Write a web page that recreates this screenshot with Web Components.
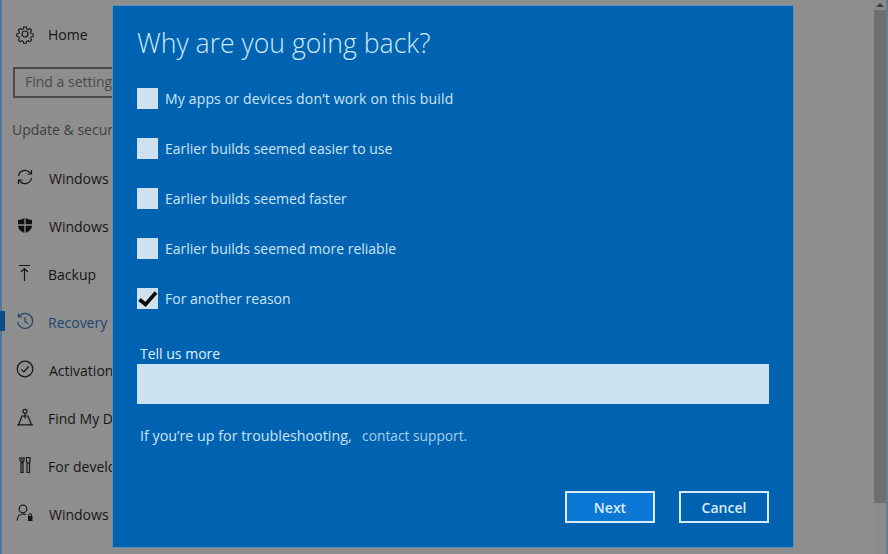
<!DOCTYPE html>
<html><head><meta charset="utf-8"><style>
html,body{margin:0;padding:0;width:888px;height:554px;overflow:hidden;background:#8e8e8e;font-family:"Open Sans",sans-serif}
</style></head><body>
<settings-page></settings-page>
<script>
const define=(n,fn)=>customElements.define(n,class extends HTMLElement{constructor(){super();this.attachShadow({mode:'open'});fn(this.shadowRoot,this)}});
const ic={
gear:'<circle cx="10" cy="10" r="3"/><path d="M8.500 2h3l.4 2.300 1.600.7 2-1.300 2.100 2.100-1.300 2 .7 1.600 2.300.4v3l-2.300.4-.7 1.600 1.300 2-2.100 2.100-2-1.300-1.600.7-.4 2.300h-3l-.4-2.300-1.600-.7-2 1.300-2.100-2.100 1.300-2-.7-1.600-2.300-.4v-3l2.300-.4.7-1.600-1.300-2 2.100-2.100 2 1.300 1.600-.7z" transform="translate(1.200 1.200) scale(.88)"/>',
sync:'<path d="M3.500 9a6.600 6.600 0 0 1 11.500-3.400L16.500 7M16.500 3v4h-4M16.500 11A6.600 6.600 0 0 1 5 14.400L3.500 13M3.500 17v-4h4"/>',
shield:'<path d="M10 2.500c2 1.600 4.300 2.300 7 2.500v5.500c0 3.500-2.800 6-7 7.500-4.200-1.500-7-4-7-7.500V5c2.700-.2 5-.9 7-2.500z" fill="#111" stroke="none"/><path d="M10 2v16M2.500 10h15" stroke="#8e8e8e" stroke-width="1.300"/>',
up:'<path d="M4 2.500h11M9.500 18V5.500M6 9l3.500-3.500L13 9"/>',
hist:'<path d="M4 5.500A7.500 7.500 0 1 1 2.700 11M3.500 2.500v3.300h3.300M10 6v4.500l3.200 2.200"/>',
ok:'<circle cx="10" cy="10" r="7.800"/><path d="M6.300 10.300l2.500 2.500 5-5.300"/>',
find:'<circle cx="10" cy="4.300" r="2"/><path d="M2 17.800h16M3.500 17.800L7 9h6l3.500 8.800M10 6.500v5"/>',
dev:'<path d="M5 2v3a2 2 0 0 0 4 0V2M7 2v3.500M6 8h2v9.500H6zM11.500 2.500h3.500v4l-1 1.500h-1.500l-1-1.500zM12 8h2.500v9.500H12z"/>',
user:'<circle cx="8" cy="6" r="3.800"/><path d="M2 17.500c.4-4 2.800-6.500 6-6.500 1 0 1.900.2 2.700.6"/><rect x="13" y="13" width="4.500" height="5" fill="currentColor" stroke="none"/><path d="M13.800 13v-1a1.400 1.400 0 0 1 2.800 0v1" stroke-width="1"/>'
};
define('nav-item',(r,h)=>{r.innerHTML=`<style>
:host{display:flex;align-items:center;height:48px;padding-left:15px;gap:13px;font-size:14px;color:#161616;white-space:nowrap;position:relative}
:host([active]){color:#20466e}
:host([active])::before{content:"";position:absolute;left:0;top:14px;width:5px;height:20px;background:#0b4f8a}
svg{width:20px;height:20px;flex:none;fill:none;stroke:currentColor;stroke-width:1.200}
span{margin:var(--drop,2px) 0 0 var(--nudge,0)}
</style><svg viewBox="0 0 20 20">${ic[h.getAttribute('icon')]}</svg><span><slot></slot></span>`});
define('check-row',(r,h)=>{r.innerHTML=`<style>
:host{display:flex;align-items:center;height:21px;gap:7px;font-size:14px;color:#cfe4f3;white-space:nowrap}
.b{width:21px;height:21px;background:#cfe1ef;flex:none;display:flex}
svg{width:21px;height:21px}
</style><span class="b">${h.hasAttribute('checked')?'<svg viewBox="0 0 21 21"><path d="M2.500 11.500l6 5L19 4.500" fill="none" stroke="#0a0a0a" stroke-width="3.600"/></svg>':''}</span><span><slot></slot></span>`});
define('action-button',(r)=>{r.innerHTML=`<style>:host{display:flex;align-items:center;justify-content:center;box-sizing:border-box;width:90px;height:32px;border:2px solid #d5ecf8;color:#d8ecf8;font-size:14px;font-weight:600}:host([primary]){background:#0a78d4}</style><slot></slot>`});
define('reason-dialog',(r)=>{r.innerHTML=`<style>
:host{position:absolute;left:113px;top:6px;width:680px;height:541px;box-sizing:border-box;background:#0063b1;box-shadow:0 0 0 1px #5f8fb8;padding:17px 24px 24px;display:flex;flex-direction:column;color:#cfe4f3}
h1{margin:0;font-weight:300;font-size:26.600px;line-height:40px;color:#cfe8f6;height:65px}
.list{display:flex;flex-direction:column;gap:29px}
.lab{margin:35px 0 0 3px;font-size:14px;line-height:20px;height:20px;color:#e0eff9}
.inp{height:40px;background:#cde2f1;flex:none}
.more{margin-top:22px;font-size:14.300px;line-height:20px;padding-left:3px;white-space:pre}
.more span{color:#a9cfe9;font-size:13.750px;margin-left:3px}
.acts{margin-top:auto;display:flex;justify-content:flex-end;gap:24px}
</style><h1>Why are you going back?</h1>
<div class="list"><slot name="r"></slot></div>
<div class="lab">Tell us more</div><div class="inp"></div>
<div class="more">If you’re up for troubleshooting,  <span>contact support.</span></div>
<div class="acts"><slot name="a"></slot></div>`});
define('settings-page',(r)=>{r.innerHTML=`<style>
:host{display:block;position:relative;width:888px;height:554px;background:#8e8e8e;overflow:hidden}
.side{display:flex;flex-direction:column;padding-top:10px;box-sizing:border-box;height:554px;box-shadow:inset 2px 0 0 #4f7696}
.search{box-sizing:border-box;margin:9px 0 0 13px;width:120px;height:31px;flex:none;border:2px solid #4a4a4a;font-size:14px;color:#4a4a4a;padding-left:10px;line-height:26px;white-space:nowrap}
.sec{margin:22px 0 13px 12px;font-size:14px;line-height:20px;color:#3e3e3e;white-space:nowrap}
.bar{position:absolute;right:0;top:0;width:14px;height:554px;background:#8b8b8b;border-right:2px solid #5d7f9c;box-sizing:border-box}
.th{position:absolute;right:2px;top:10px;width:12px;height:493px;background:#6f6f6f}
.arr{position:absolute;right:4px;top:3px;width:0;height:0;border:4px solid transparent;border-top:0;border-bottom:4px solid #3d3d3d}
nav-item{flex:none}
</style><div class="side">
<nav-item icon="gear" style="--drop:0px">Home</nav-item>
<div class="search">Find a setting</div>
<div class="sec">Update &amp; security</div>
<nav-item icon="sync" style="--nudge:1px">Windows Update</nav-item>
<nav-item icon="shield" style="--nudge:1px">Windows Defender</nav-item>
<nav-item icon="up">Backup</nav-item>
<nav-item icon="hist" active>Recovery</nav-item>
<nav-item icon="ok" style="--nudge:1px">Activation</nav-item>
<nav-item icon="find">Find My Device</nav-item>
<nav-item icon="dev">For developers</nav-item>
<nav-item icon="user" style="--nudge:1px">Windows Insider</nav-item>
</div>
<div class="bar"></div><div class="th"></div><div class="arr"></div>
<reason-dialog>
<check-row slot="r" style="letter-spacing:.16px">My apps or devices don’t work on this build</check-row>
<check-row slot="r">Earlier builds seemed easier to use</check-row>
<check-row slot="r">Earlier builds seemed faster</check-row>
<check-row slot="r">Earlier builds seemed more reliable</check-row>
<check-row slot="r" checked>For another reason</check-row>
<action-button slot="a" primary>Next</action-button>
<action-button slot="a">Cancel</action-button>
</reason-dialog>`});
</script>
</body></html>
